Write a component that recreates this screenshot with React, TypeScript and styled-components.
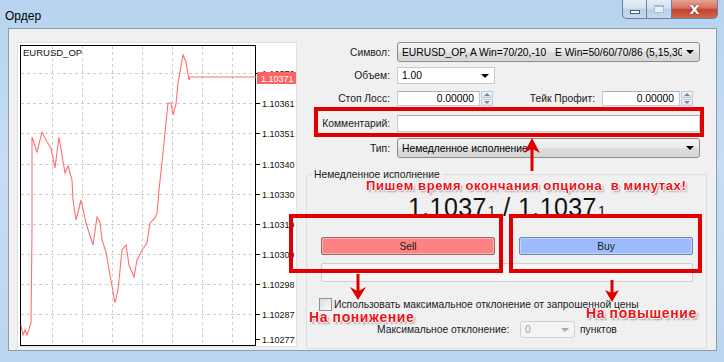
import React from "react";
import styled, { createGlobalStyle } from "styled-components";

const GlobalStyle = createGlobalStyle`
  * { box-sizing: border-box; }
  html, body { margin: 0; padding: 0; }
  body {
    width: 724px;
    height: 362px;
    overflow: hidden;
    font-family: "Liberation Sans", Arial, sans-serif;
    font-size: 10.3px;
    color: #000;
  }
`;

const Window = styled.div`
  position: relative;
  width: 724px;
  height: 362px;
  display: flex;
  flex-direction: column;
  background: linear-gradient(180deg, #b7d3ef 0%, #c6ddf4 45%, #bcd5ee 100%);
  overflow: hidden;
`;

const TitleBar = styled.div`
  height: 28px;
  flex-shrink: 0;
  display: flex;
  justify-content: space-between;
  align-items: flex-start;
  padding-left: 5px;
`;

const Title = styled.div`
  font-family: "Liberation Sans", Arial, sans-serif;
  font-size: 12px;
  line-height: 12px;
  padding-top: 10px;
`;

const Caption = styled.div`
  display: flex;
  margin-right: 6px;
`;

const CaptionButton = styled.div<{ $kind: "min" | "max" | "close" }>`
  width: ${(p) => (p.$kind === "close" ? 46 : 25)}px;
  height: 19px;
  display: flex;
  align-items: center;
  justify-content: center;
  border: 1px solid #6a819c;
  border-top: none;
  border-left: ${(p) => (p.$kind === "min" ? "1px solid #6a819c" : "none")};
  border-radius: ${(p) =>
    p.$kind === "min" ? "0 0 0 5px" : p.$kind === "close" ? "0 0 5px 0" : "0"};
  background: ${(p) =>
    p.$kind === "close"
      ? "linear-gradient(180deg, #e6a493 0%, #d5705c 45%, #c2412c 55%, #d26a52 100%)"
      : "linear-gradient(180deg, #e4edf7 0%, #d3e1f0 45%, #bccfe6 55%, #c9dbef 100%)"};
  color: #fff;
  font-family: "DejaVu Sans", sans-serif;
  font-weight: bold;
  font-size: 13px;
  text-shadow: 0 0 2px #5a2a20;
`;

const MinGlyph = styled.span`
  width: 10px;
  height: 4px;
  margin-top: 6px;
  background: #fff;
  border: 1px solid #4a5c72;
`;

const MaxGlyph = styled.span`
  width: 10px;
  height: 8px;
  border: 1px solid #a9bbd0;
  border-top-width: 2px;
  background: #e9f0f8;
`;

const Frame = styled.div`
  flex: 1;
  display: flex;
  padding: 0 7px 12px 8px;
`;

const Client = styled.div`
  flex: 1;
  display: flex;
  align-items: flex-start;
  gap: 9px;
  padding: 13px 9px 1px 8px;
  background: #f0f0f0;
  border: 1px solid #8d9db0;
`;

const ChartPanel = styled.div`
  width: 280px;
  height: 305px;
  flex-shrink: 0;
  background: #fff;
  border: 1px solid #e2e2e2;
  overflow: hidden;
`;

const Side = styled.div`
  width: 401px;
  display: flex;
  flex-direction: column;
`;

const Row = styled.div<{ $h: number; $mt?: number }>`
  display: flex;
  align-items: center;
  height: ${(p) => p.$h}px;
  margin-top: ${(p) => p.$mt ?? 0}px;
`;

const Label = styled.div<{ $w?: number }>`
  width: ${(p) => p.$w ?? 84}px;
  margin-right: 7px;
  text-align: right;
  white-space: nowrap;
  color: #1a1a1a;
`;

const Combo = styled.div<{ $w: number; $white?: boolean; $disabled?: boolean }>`
  width: ${(p) => p.$w}px;
  height: 100%;
  display: flex;
  align-items: center;
  padding: 0 5px 0 4px;
  border: 1px solid ${(p) => (p.$white ? "#c5cbd2" : p.$disabled ? "#d2d2d2" : "#8b8b8b")};
  border-radius: ${(p) => (p.$white ? 0 : 3)}px;
  background: ${(p) =>
    p.$white
      ? "#fff"
      : p.$disabled
      ? "#f4f4f4"
      : "linear-gradient(180deg, #f3f3f3 0%, #ebebeb 48%, #dddddd 52%, #d6d6d6 100%)"};
  color: ${(p) => (p.$disabled ? "#a0a0a0" : "#000")};
  overflow: hidden;
`;

const ComboText = styled.span`
  flex: 1;
  white-space: nowrap;
  overflow: hidden;
`;

const DownArrow = styled.span<{ $color?: string }>`
  width: 0;
  height: 0;
  margin-left: 4px;
  border-left: 4px solid transparent;
  border-right: 4px solid transparent;
  border-top: 4px solid ${(p) => p.$color ?? "#000"};
  flex-shrink: 0;
`;

const Spin = styled.div<{ $w: number }>`
  width: ${(p) => p.$w}px;
  height: 100%;
  display: flex;
`;

const SpinInput = styled.div`
  flex: 1;
  height: 100%;
  display: flex;
  align-items: center;
  justify-content: flex-end;
  padding-right: 5px;
  background: #fff;
  border: 1px solid #c5cbd2;
  border-top-color: #abadb3;
`;

const SpinButtons = styled.div`
  width: 12px;
  margin-left: 1px;
  display: flex;
  flex-direction: column;
  gap: 1px;
`;

const SpinHalf = styled.div<{ $up?: boolean }>`
  flex: 1;
  display: flex;
  align-items: center;
  justify-content: center;
  background: linear-gradient(180deg, #f2f5f8, #dfe6ee);
  border: 1px solid #c3ccd6;
  &::after {
    content: "";
    width: 0;
    height: 0;
    border-left: 3px solid transparent;
    border-right: 3px solid transparent;
    ${(p) => (p.$up ? "border-bottom" : "border-top")}: 3px solid #6d87a6;
  }
`;

const TextField = styled.div<{ $w: number }>`
  width: ${(p) => p.$w}px;
  height: 100%;
  background: #fff;
  border: 1px solid #c5cbd2;
  border-top-color: #abadb3;
`;

const Group = styled.div`
  margin-top: 16px;
  height: 175px;
  display: flex;
  flex-direction: column;
  padding: 0 13px 0 14px;
  border: 1px solid #d5dfe5;
  border-radius: 3px;
`;

const Legend = styled.div`
  align-self: flex-start;
  margin: -7px 0 0 -9px;
  padding: 0 2px;
  line-height: 13px;
  background: #f0f0f0;
  color: #1a1a1a;
`;

const Price = styled.div`
  margin-top: 13px;
  height: 26px;
  line-height: 26px;
  text-align: center;
  font-family: "Liberation Sans", Arial, sans-serif;
  font-size: 25px;
  letter-spacing: 0.4px;
  color: #111;
  small {
    font-size: 14px;
    margin-left: 1px;
  }
`;

const Buttons = styled.div`
  margin-top: 17px;
  display: grid;
  grid-template-columns: 1fr 1fr;
  column-gap: 24px;
  height: 18px;
`;

const TradeButton = styled.div<{ $color: string; $border: string }>`
  display: flex;
  align-items: center;
  justify-content: center;
  background: ${(p) => p.$color};
  border: 1px solid ${(p) => p.$border};
  border-radius: 2px;
  box-shadow: inset 0 0 0 1px rgba(255, 255, 255, 0.35);
  color: #1a1a1a;
`;

const InfoBox = styled.div`
  margin-top: 8px;
  height: 19px;
  background: #f7f7f7;
  border: 1px solid #d0d0d0;
  border-radius: 2px;
`;

const CheckRow = styled.div`
  margin: 16px 0 0 -2px;
  height: 13px;
  display: flex;
  align-items: center;
  white-space: nowrap;
  color: #1a1a1a;
`;

const CheckBox = styled.span`
  width: 13px;
  height: 13px;
  margin-right: 2px;
  border: 1px solid #8e8f8f;
  background: linear-gradient(135deg, #dcdcdc, #fbfbfb);
`;

const DevRow = styled.div`
  margin-top: 10px;
  height: 17px;
  display: flex;
  align-items: center;
  padding-left: 56px;
  color: #1a1a1a;
`;

const DevLabel = styled.span`
  width: 143px;
  white-space: nowrap;
`;

const Units = styled.span`
  margin-left: 5px;
`;

/* annotations drawn over the dialog */
const RedBox = styled.div<{ $x: number; $y: number; $w: number; $h: number }>`
  position: absolute;
  left: ${(p) => p.$x}px;
  top: ${(p) => p.$y}px;
  width: ${(p) => p.$w}px;
  height: ${(p) => p.$h}px;
  border: 4px solid #e00000;
  pointer-events: none;
`;

const Note = styled.div<{ $x: number; $y: number; $size?: number }>`
  position: absolute;
  left: ${(p) => p.$x}px;
  top: ${(p) => p.$y}px;
  font-family: "Liberation Sans", Arial, sans-serif;
  font-weight: bold;
  font-size: ${(p) => p.$size ?? 13}px;
  line-height: 16px;
  letter-spacing: 0.6px;
  white-space: pre;
  color: #e8141a;
  text-shadow: 1px 0 0 #fff, -1px 0 0 #fff, 0 1px 0 #fff, 0 -1px 0 #fff,
    2px 2px 2px rgba(0, 0, 0, 0.35);
`;

const ArrowLayer = styled.svg`
  position: absolute;
  left: 0;
  top: 0;
  pointer-events: none;
`;

const gridX = [35, 65, 95, 125, 155, 185, 215];
const gridY = [31, 61, 91, 122, 152, 182, 212, 242, 272];
const axisLabels: [number, string][] = [
  [31, "1.10372"],
  [61, "1.10361"],
  [91, "1.10351"],
  [122, "1.10340"],
  [152, "1.10330"],
  [182, "1.10319"],
  [212, "1.10309"],
  [242, "1.10298"],
  [272, "1.10287"],
  [297, "1.10277"],
];

const pricePath: [number, number][] = [
  [4, 283], [6, 293], [8, 288], [10, 293], [14, 281], [15, 188], [15, 95],
  [20, 110], [25, 90], [30, 100], [34, 106], [38, 126], [42, 95], [48, 131],
  [51, 124], [55, 138], [56, 158], [59, 178], [64, 158], [69, 181], [76, 203],
  [80, 175], [83, 180], [85, 198], [89, 210], [93, 233], [98, 261], [101, 248],
  [105, 208], [109, 203], [112, 223], [117, 235], [120, 218], [125, 208],
  [130, 201], [133, 181], [138, 176], [140, 171], [142, 148], [146, 111],
  [151, 61], [154, 61], [156, 73], [159, 62], [161, 41], [166, 13], [169, 20],
  [172, 38], [173, 35], [239, 35],
];

const Chart: React.FC = () => (
  <svg width="278" height="303" viewBox="1 1 278 303">
    {gridX.map((x) => (
      <line key={`x${x}`} x1={x + 0.5} y1={4} x2={x + 0.5} y2={303} stroke="#cdcdcd" strokeDasharray="3 3" />
    ))}
    {gridY.map((y) => (
      <line key={`y${y}`} x1={4} y1={y + 0.5} x2={239} y2={y + 0.5} stroke="#cdcdcd" strokeDasharray="3 3" />
    ))}
    <rect x={3.5} y={3.5} width={235} height={300} fill="none" stroke="#000" />
    <text x={6} y={14} fontFamily="Liberation Sans, Arial, sans-serif" fontSize="9.5" fill="#111">
      EURUSD_OP
    </text>
    {axisLabels.map(([y, t]) => (
      <g key={t}>
        <line x1={239} y1={y + 0.5} x2={243} y2={y + 0.5} stroke="#000" />
        <text x={245} y={y + 4} fontFamily="Liberation Sans, Arial, sans-serif" fontSize="9" fill="#111">
          {t}
        </text>
      </g>
    ))}
    <polyline
      points={pricePath.map(([x, y]) => `${x},${y}`).join(" ")}
      fill="none"
      stroke="#ff7070"
      strokeWidth="1.1"
    />
    <rect x={240} y={30} width={39} height={12} fill="#ff6262" />
    <text x={244} y={39.5} fontFamily="Liberation Sans, Arial, sans-serif" fontSize="9" fill="#fff">
      1.10371
    </text>
  </svg>
);

const App: React.FC = () => (
  <>
    <GlobalStyle />
    <Window>
      <TitleBar>
        <Title>Ордер</Title>
        <Caption>
          <CaptionButton $kind="min">
            <MinGlyph />
          </CaptionButton>
          <CaptionButton $kind="max">
            <MaxGlyph />
          </CaptionButton>
          <CaptionButton $kind="close">X</CaptionButton>
        </Caption>
      </TitleBar>
      <Frame>
        <Client>
          <ChartPanel>
            <Chart />
          </ChartPanel>
          <Side>
            <Row $h={20}>
              <Label>Символ:</Label>
              <Combo $w={303}>
                <ComboText>EURUSD_OP, A Win=70/20,-10&nbsp;&nbsp;&nbsp;E Win=50/60/70/86 (5,15,30</ComboText>
                <DownArrow />
              </Combo>
            </Row>
            <Row $h={17} $mt={5}>
              <Label>Объем:</Label>
              <Combo $w={98} $white>
                <ComboText>1.00</ComboText>
                <DownArrow />
              </Combo>
            </Row>
            <Row $h={15} $mt={7}>
              <Label>Стоп Лосс:</Label>
              <Spin $w={96}>
                <SpinInput>0.00000</SpinInput>
                <SpinButtons>
                  <SpinHalf $up />
                  <SpinHalf />
                </SpinButtons>
              </Spin>
              <Label $w={102}>Тейк Профит:</Label>
              <Spin $w={91}>
                <SpinInput>0.00000</SpinInput>
                <SpinButtons>
                  <SpinHalf $up />
                  <SpinHalf />
                </SpinButtons>
              </Spin>
            </Row>
            <Row $h={17} $mt={9}>
              <Label>Комментарий:</Label>
              <TextField $w={303} />
            </Row>
            <Row $h={20} $mt={6}>
              <Label>Тип:</Label>
              <Combo $w={303}>
                <ComboText>Немедленное исполнение</ComboText>
                <DownArrow />
              </Combo>
            </Row>
            <Group>
              <Legend>Немедленное исполнение</Legend>
              <Price>
                1.1037<small>1</small> / 1.1037<small>1</small>
              </Price>
              <Buttons>
                <TradeButton $color="#ff8282" $border="#a06a6a">Sell</TradeButton>
                <TradeButton $color="#9dbcff" $border="#7486a8">Buy</TradeButton>
              </Buttons>
              <InfoBox />
              <CheckRow>
                <CheckBox />
                Использовать максимальное отклонение от запрошенной цены
              </CheckRow>
              <DevRow>
                <DevLabel>Максимальное отклонение:</DevLabel>
                <Combo $w={55} $disabled>
                  <ComboText>0</ComboText>
                  <DownArrow $color="#a8a8a8" />
                </Combo>
                <Units>пунктов</Units>
              </DevRow>
            </Group>
          </Side>
        </Client>
      </Frame>

      <RedBox $x={314} $y={107} $w={390} $h={30} />
      <RedBox $x={289} $y={214} $w={214} $h={59} />
      <RedBox $x={509} $y={214} $w={193} $h={59} />
      <ArrowLayer width="724" height="362">
        <polygon points="532,138 540,153 533.5,149.5 533.5,171 530.5,171 530.5,149.5 524,153" fill="#e00000" />
        <polygon points="358,300 366,287 359.5,290.5 359.5,274 356.5,274 356.5,290.5 350,287" fill="#e00000" />
        <polygon points="612,302 619,290 613.5,292.5 613.5,280 610.5,280 610.5,292.5 605,290" fill="#e00000" />
      </ArrowLayer>
      <Note $x={366} $y={178}>Пишем время окончания опциона  в минутах!</Note>
      <Note $x={309} $y={309} $size={14}>На понижение</Note>
      <Note $x={586} $y={305} $size={14}>На повышение</Note>
    </Window>
  </>
);

export default App;
